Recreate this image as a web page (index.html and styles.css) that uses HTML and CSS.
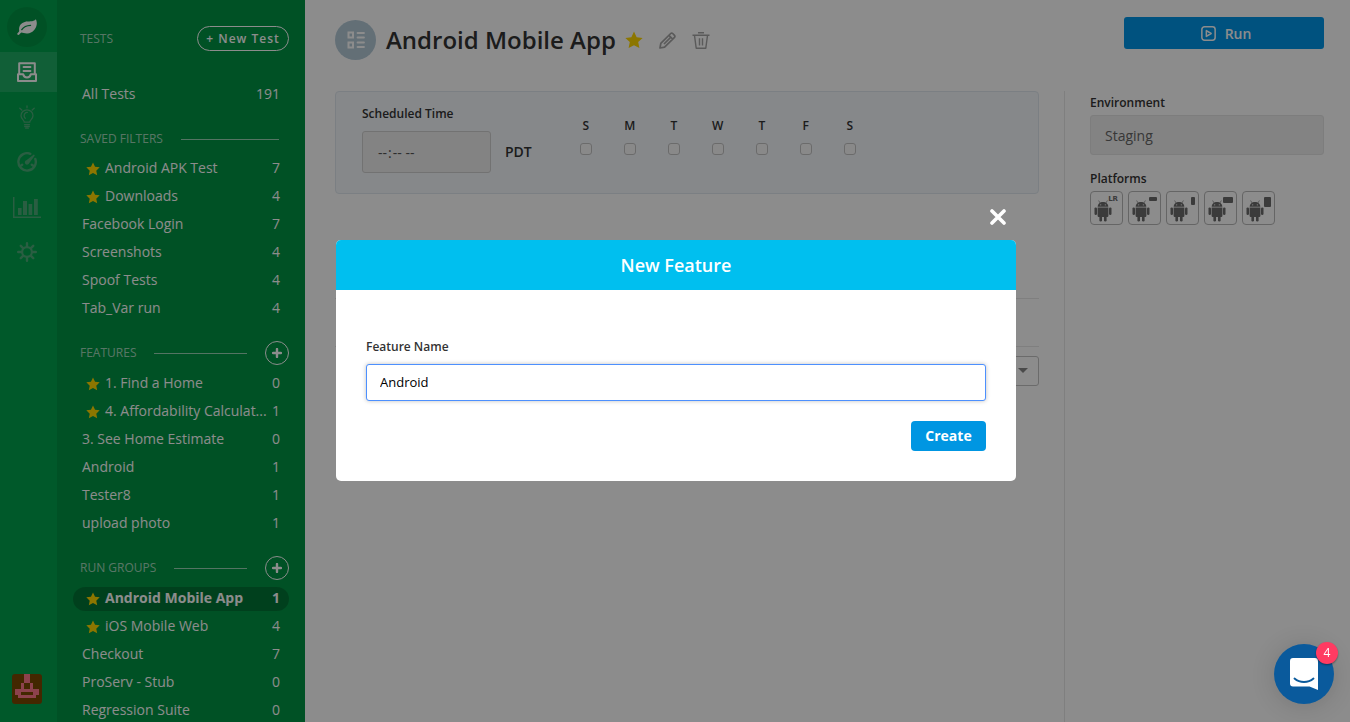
FILE: index.html
```html
<!DOCTYPE html>
<html lang="en">

<head>
    <meta charset="UTF-8">
    <meta name="viewport" content="width=device-width, initial-scale=1.0">
    <title>Android Mobile App</title>
    <link rel="stylesheet" href="styles.css">
</head>

<body>
    <svg class="sprite" aria-hidden="true">
        <symbol id="star" viewBox="0 0 24 24">
            <path d="M12 0.8l3.5 7.4 8 1-5.9 5.6 1.6 8L12 18.900l-7.200 3.900 1.600-8L0.500 9.200l8-1z" />
        </symbol>
        <symbol id="plus" viewBox="0 0 10 10">
            <path d="M5 1v8M1 5h8" stroke="currentColor" stroke-width="2.400" stroke-linecap="round" />
        </symbol>
        <symbol id="droid" viewBox="0 0 18 22">
            <path d="M4.600 0.500l1.500 2.500M13.400 0.500l-1.500 2.500" stroke="currentColor" stroke-width="0.600" />
            <path d="M3.700 6.800C3.700 4 6 2.100 9 2.100s5.300 1.900 5.300 4.700z" />
            <path d="M3.600 7.400h10.800v8.300a1.200 1.200 0 0 1-1.200 1.200H4.800a1.200 1.200 0 0 1-1.200-1.200z" />
            <rect x="0.500" y="7.400" width="2.500" height="7.600" rx="1.200" />
            <rect x="15" y="7.400" width="2.500" height="7.600" rx="1.200" />
            <rect x="5.400" y="15" width="2.600" height="6.500" rx="1.200" />
            <rect x="10" y="15" width="2.600" height="6.500" rx="1.200" />
            <circle class="eye" cx="6.700" cy="4.800" r="0.600" />
            <circle class="eye" cx="11.300" cy="4.800" r="0.600" />
        </symbol>
    </svg>

    <nav class="rail" aria-label="Main">
        <a href="#" class="logo" aria-label="Home">
            <svg width="20" height="16" viewBox="0 0 20 16">
                <path d="M18.800 0.300c0.800 1.200 1.200 3.200 0.900 5.200-0.600 4.700-4.200 8.500-9.200 9-2.500 0.200-4.500-0.500-6.200-0.900-0.900 0.500-1.400 1.200-2 1.900-0.600 0.700-1.700 0.400-2-0.200-0.300-0.700 0.200-1.200 0.700-1.600 0.700-0.600 1.200-1 1.200-1.900C1.500 7.200 3.800 3.900 7.800 2.900c3.600-0.900 8.500 0.400 11-2.600z" />
                <path class="vein" d="M4.800 10.600c1.800-2.500 4.800-4 8.700-4.200" />
            </svg>
        </a>
        <a href="#" class="rail-link active" aria-label="Tests">
            <svg width="20" height="20" viewBox="0 0 20 20">
                <path fill="none" stroke="currentColor" stroke-width="2" stroke-linejoin="round" d="M2.200 11.500V1.200h15.600v10.300M1 12.300h5.200c0.400 2 1.600 3.300 3.800 3.300s3.400-1.300 3.800-3.300H19V19H1z" />
                <path fill="none" stroke="currentColor" stroke-width="1.800" stroke-linecap="round" d="M6.500 5h7M6.500 9h7" />
            </svg>
        </a>
        <a href="#" class="rail-link" aria-label="Ideas">
            <svg width="16" height="24" viewBox="0 0 16 24">
                <g fill="none" stroke="currentColor" stroke-width="1.300" stroke-linecap="round">
                    <path d="M8 0.800v2M0.800 3.200l2 1.800M15.200 3.200l-2 1.800" />
                    <path d="M5.300 17.200c0-2.200-3.300-3.300-3.300-6.400a6 6 0 0 1 12 0c0 3.100-3.300 4.200-3.300 6.400z" />
                    <path d="M8.300 7.400c-2.200 0-3.400 1.800-3.100 3.900 0.200 1 0.600 1.500 1.100 2" />
                    <path d="M5.500 19.700h5M5.700 21.500h4.600M6.700 23.200h2.600" />
                </g>
            </svg>
        </a>
        <a href="#" class="rail-link" aria-label="Speed">
            <svg width="20" height="20" viewBox="0 0 20 20">
                <path fill="none" stroke="currentColor" stroke-width="2.400" stroke-linecap="round" d="M13.300 1.800A8.700 8.700 0 1 0 18.300 7M3.800 13.700l1.400-1M16.200 13.700l-1.400-1" />
                <path d="M16.800 2.600c0.700 0.300 1 0.700 0.900 1.200l-5.400 7.300a2.300 2.300 0 1 1-2.900-2.900z" />
            </svg>
        </a>
        <a href="#" class="rail-link" aria-label="Reports">
            <svg width="28" height="21" viewBox="0 0 28 21">
                <path d="M0 0h1.500v19.500H28V21H0zM5 11h3.600v7H5zM10 4h4v14h-4zM15.600 7h3.600v11h-3.600zM21 2h3.800v16H21z" />
            </svg>
        </a>
        <a href="#" class="rail-link" aria-label="Settings">
            <svg width="20" height="20" viewBox="0 0 20 20">
                <circle cx="10" cy="10" r="4.900" fill="none" stroke="currentColor" stroke-width="2.200" />
                <path stroke="currentColor" stroke-width="2.400" stroke-linecap="round" d="M10 1.200v3M10 15.800v3M1.200 10h3M15.800 10h3M3.800 3.800l2 2M14.200 14.200l2 2M3.800 16.200l2-2M14.200 5.800l2-2" />
            </svg>
        </a>
        <a href="#" class="avatar" aria-label="Account">
            <svg width="30" height="30" viewBox="0 0 10 10" shape-rendering="crispEdges">
                <path d="M4 0h2v3h1v2h2v2H8v1H2V7H1V5h2V3h1zM4 3v2h2V3zM3 6v1h4V6z" fill-rule="evenodd" />
            </svg>
        </a>
    </nav>

    <aside class="sidebar">
        <header class="sidebar-top">
            <h2>TESTS</h2>
            <button type="button" class="new-test">+ New Test</button>
        </header>

        <ul class="list">
            <li><a href="#"><span class="name">All Tests</span><span>191</span></a></li>
        </ul>

        <div class="section-head no-button">
            <h2>SAVED FILTERS</h2>
            <hr>
        </div>
        <ul class="list">
            <li><a href="#"><svg class="star"><use href="#star" /></svg><span class="name">Android APK Test</span><span>7</span></a></li>
            <li><a href="#"><svg class="star"><use href="#star" /></svg><span class="name">Downloads</span><span>4</span></a></li>
            <li><a href="#"><span class="name">Facebook Login</span><span>7</span></a></li>
            <li><a href="#"><span class="name">Screenshots</span><span>4</span></a></li>
            <li><a href="#"><span class="name">Spoof Tests</span><span>4</span></a></li>
            <li><a href="#"><span class="name">Tab_Var run</span><span>4</span></a></li>
        </ul>

        <div class="section-head">
            <h2>FEATURES</h2>
            <hr>
            <button type="button" class="add" aria-label="Add feature"><svg width="10" height="10"><use href="#plus" /></svg></button>
        </div>
        <ul class="list">
            <li><a href="#"><svg class="star"><use href="#star" /></svg><span class="name">1. Find a Home</span><span>0</span></a></li>
            <li><a href="#"><svg class="star"><use href="#star" /></svg><span class="name">4. Affordability Calculat...</span><span>1</span></a></li>
            <li><a href="#"><span class="name">3. See Home Estimate</span><span>0</span></a></li>
            <li><a href="#"><span class="name">Android</span><span>1</span></a></li>
            <li><a href="#"><span class="name">Tester8</span><span>1</span></a></li>
            <li><a href="#"><span class="name">upload photo</span><span>1</span></a></li>
        </ul>

        <div class="section-head">
            <h2>RUN GROUPS</h2>
            <hr>
            <button type="button" class="add" aria-label="Add run group"><svg width="10" height="10"><use href="#plus" /></svg></button>
        </div>
        <ul class="list">
            <li><a href="#" class="selected"><svg class="star"><use href="#star" /></svg><span class="name">Android Mobile App</span><span>1</span></a></li>
            <li><a href="#"><svg class="star"><use href="#star" /></svg><span class="name">iOS Mobile Web</span><span>4</span></a></li>
            <li><a href="#"><span class="name">Checkout</span><span>7</span></a></li>
            <li><a href="#"><span class="name">ProServ - Stub</span><span>0</span></a></li>
            <li><a href="#"><span class="name">Regression Suite</span><span>0</span></a></li>
        </ul>
    </aside>

    <main class="main">
        <header class="page-head">
            <span class="group-icon">
                <svg width="18" height="18" viewBox="0 0 18 18">
                    <path fill="none" stroke="currentColor" stroke-width="2" d="M1.500 1.500h4.500v5h-4.500zM1.500 11.500h4.500v5h-4.500z" />
                    <path fill="none" stroke="currentColor" stroke-width="1.800" stroke-linecap="round" d="M10.500 2h6.500M10.500 6.500h6.500M10.500 11.500h6.500M10.500 16h6.500" />
                </svg>
            </span>
            <h1>Android Mobile App</h1>
            <button type="button" class="icon-button favorite" aria-label="Favorite"><svg width="18" height="18"><use href="#star" /></svg></button>
            <button type="button" class="icon-button" aria-label="Edit">
                <svg class="line" width="17" height="17" viewBox="0 0 17 17" stroke-width="1.700">
                    <path d="M1 16l0.800-4.600L11.700 1.500a1.400 1.400 0 0 1 2 0l1.800 1.800a1.400 1.400 0 0 1 0 2L5.600 15.200zM10 3.400L13.600 7M11.500 5.500L5 12" />
                </svg>
            </button>
            <button type="button" class="icon-button" aria-label="Delete">
                <svg class="line" width="18" height="17" viewBox="0 0 18 17" stroke-width="1.400">
                    <path d="M6 0.800h6M0.500 3.200h17M2.500 3.500l1.700 12.700h9.600l1.700-12.700M7.500 6.200v7.300M10.500 6.200v7.300" />
                </svg>
            </button>
            <button type="button" class="run">
                <svg class="line" width="15" height="15" viewBox="0 0 14 14" stroke-width="1.400">
                    <rect x="0.800" y="0.800" width="12.400" height="12.400" rx="2.500" />
                    <path d="M5 4.300v5.400L9.500 7z" />
                </svg>
                Run
            </button>
        </header>

        <div class="columns">
            <div class="content">
                <section class="schedule">
                    <div class="field">
                        <label for="time">Scheduled Time</label>
                        <div class="time-row">
                            <input type="time" id="time" disabled>
                            <span class="zone">PDT</span>
                        </div>
                    </div>
                    <div class="days">
                        <label>S<input type="checkbox"></label>
                        <label>M<input type="checkbox"></label>
                        <label>T<input type="checkbox"></label>
                        <label>W<input type="checkbox"></label>
                        <label>T<input type="checkbox"></label>
                        <label>F<input type="checkbox"></label>
                        <label>S<input type="checkbox"></label>
                    </div>
                </section>
                <div class="table-head"></div>
                <div class="filter">
                    <select aria-label="Filter"></select>
                    <svg width="10" height="5" viewBox="0 0 10 5"><path d="M0 0h10L5 5z" /></svg>
                </div>
            </div>

            <aside class="details">
                <label for="environment">Environment</label>
                <select id="environment">
                    <option>Staging</option>
                </select>
                <h3>Platforms</h3>
                <ul class="platforms">
                    <li><svg class="droid"><use href="#droid" /></svg><span class="lr">LR</span></li>
                    <li><svg class="droid"><use href="#droid" /></svg><span class="shape phone-wide"></span></li>
                    <li><svg class="droid"><use href="#droid" /></svg><span class="shape phone-tall"></span></li>
                    <li><svg class="droid"><use href="#droid" /></svg><span class="shape tablet-wide"></span></li>
                    <li><svg class="droid"><use href="#droid" /></svg><span class="shape tablet-tall"></span></li>
                </ul>
            </aside>
        </div>
    </main>

    <div class="overlay">
        <div class="modal" role="dialog" aria-labelledby="modal-title">
            <button type="button" class="close" aria-label="Close">
                <svg width="16" height="16" viewBox="0 0 16 16"><path d="M2 2l12 12M14 2L2 14" stroke="currentColor" stroke-width="3.600" stroke-linecap="round" /></svg>
            </button>
            <h2 id="modal-title">New Feature</h2>
            <form class="modal-body">
                <label for="feature-name">Feature Name</label>
                <input type="text" id="feature-name" value="Android">
                <button type="submit">Create</button>
            </form>
        </div>
    </div>

    <button type="button" class="chat" aria-label="Messages">
        <svg width="28" height="32" viewBox="0 0 28 32">
            <path d="M3 0h22a3 3 0 0 1 3 3v29l-8.500-3.500H3a3 3 0 0 1-3-3V3a3 3 0 0 1 3-3z" fill="#fff" />
            <path d="M4.500 20.500c5.500 4.700 13.500 4.700 19 0" fill="none" stroke="#0a5a9c" stroke-width="1.900" stroke-linecap="round" />
        </svg>
        <span class="count">4</span>
    </button>
</body>

</html>
```
FILE: styles.css
```css
* {
    margin: 0;
    padding: 0;
    box-sizing: border-box;
}

body {
    display: flex;
    height: 100vh;
    overflow: hidden;
    font-family: "Open Sans", "Noto Sans", sans-serif;
    font-size: 14px;
    color: #333;
    background-color: #fff;
}

a {
    color: inherit;
    text-decoration: none;
}

ul {
    list-style: none;
}

button,
input,
select {
    font: inherit;
    color: inherit;
}

button {
    border: 0;
    background: none;
}

svg {
    display: block;
    fill: currentColor;
}

.line {
    fill: none;
    stroke: currentColor;
    stroke-linejoin: round;
}

.sprite {
    position: absolute;
    width: 0;
    height: 0;
}

/* left rail */
.rail {
    width: 57px;
    flex-shrink: 0;
    display: flex;
    flex-direction: column;
    background-color: #00a34d;
    color: #fff;
}

.logo {
    display: flex;
    align-items: center;
    justify-content: center;
    width: 40px;
    height: 40px;
    margin: 7px 7px 5px;
    border-radius: 50%;
    background-color: #009444;
}

.vein {
    fill: none;
    stroke: #009444;
    stroke-width: 1.4;
    stroke-linecap: round;
}

.rail-link {
    display: flex;
    align-items: center;
    justify-content: center;
    height: 40px;
    margin-bottom: 5px;
    padding-right: 3px;
    color: #4dab78;
}

.rail-link.active {
    color: #fff;
    background-color: #20ae64;
}

.avatar {
    width: 30px;
    height: 30px;
    margin: auto 12px 18px;
    border-radius: 3px;
    overflow: hidden;
    background-color: #7a4800;
    color: #ff788c;
}

/* sidebar */
.sidebar {
    width: 248px;
    flex-shrink: 0;
    padding: 26px 16px 0;
    background-color: #009444;
    color: #fff;
}

.sidebar h2 {
    font-size: 12px;
    font-weight: 400;
    line-height: 18px;
    color: rgba(255, 255, 255, 0.65);
}

.sidebar-top {
    display: flex;
    align-items: center;
    justify-content: space-between;
    padding-left: 7px;
    margin-bottom: 32px;
}

.new-test {
    width: 92px;
    height: 25px;
    border: 1px solid #fff;
    border-radius: 13px;
    font-size: 12px;
    font-weight: 600;
    letter-spacing: 1px;
    line-height: 20px;
}

.list {
    display: flex;
    flex-direction: column;
    gap: 4px;
}

.list a {
    display: flex;
    height: 24px;
    padding: 0 9px;
    border-radius: 12px;
    line-height: 22px;
}

.list .name {
    flex: 1;
    white-space: nowrap;
}

.list .selected {
    background-color: rgba(0, 0, 0, 0.2);
    font-weight: 700;
}

.star {
    width: 14px;
    height: 14px;
    margin: 5px 5px 0 4px;
    color: #ffd700;
}

.section-head {
    display: flex;
    align-items: center;
    gap: 18px;
    height: 24px;
    margin: 20px 0 7px;
    padding-left: 7px;
}

.section-head.no-button {
    margin-bottom: 6px;
    padding-right: 10px;
}

.section-head hr {
    flex: 1;
    border: 0;
    border-top: 1px solid rgba(255, 255, 255, 0.6);
}

.add {
    display: flex;
    align-items: center;
    justify-content: center;
    width: 24px;
    height: 24px;
    border: 1px solid #fff;
    border-radius: 50%;
}

/* main area */
.main {
    flex: 1;
    display: flex;
    flex-direction: column;
    padding: 17px 26px 0 30px;
}

.page-head {
    display: flex;
    align-items: center;
    height: 46px;
    margin-bottom: 28px;
}

.group-icon {
    display: flex;
    align-items: center;
    justify-content: center;
    width: 41px;
    height: 40px;
    margin-right: 10px;
    border-radius: 50%;
    background-color: #b4cad8;
    color: #fff;
}

.page-head h1 {
    font-size: 24px;
    font-weight: 600;
    line-height: 32px;
}

.icon-button {
    margin-left: 16px;
    color: #a4a4a4;
}

.favorite {
    margin-left: 9px;
    color: #ffd700;
}

.run {
    display: flex;
    align-items: center;
    justify-content: center;
    gap: 9px;
    align-self: flex-start;
    width: 200px;
    height: 32px;
    margin-left: auto;
    padding-left: 4px;
    border-radius: 3px;
    font-weight: 600;
    color: #fff;
    background-color: #0096e8;
}

.columns {
    flex: 1;
    display: flex;
    gap: 25px;
}

.content {
    flex: 1;
}

.schedule {
    display: flex;
    padding: 12px 26px 20px;
    border: 1px solid #e0e8ee;
    border-radius: 4px;
    background-color: #f4f8fc;
}

label,
.details h3 {
    font-size: 12px;
    font-weight: 600;
    line-height: 20px;
}

.field {
    display: flex;
    flex-direction: column;
    gap: 7px;
}

.time-row {
    display: flex;
    align-items: center;
    gap: 14px;
}

.time-row input {
    width: 129px;
    height: 42px;
    padding: 0 14px;
    border: 1px solid #d0d0d0;
    border-radius: 3px;
    background-color: #eee;
    color: #555;
}

.time-row input::-webkit-calendar-picker-indicator {
    display: none;
}

.zone {
    font-weight: 600;
    line-height: 20px;
}

.days {
    display: flex;
    margin: 12px 0 0 32px;
}

.days label {
    display: flex;
    flex-direction: column;
    align-items: center;
    gap: 7px;
    width: 44px;
}

.days input {
    appearance: none;
    width: 12px;
    height: 12px;
    border: 1px solid #c4c4c4;
    border-radius: 3px;
    background-color: #fafafa;
}

.table-head {
    height: 49px;
    margin-top: 104px;
    border-top: 1px solid #e8e8e8;
    border-bottom: 1px solid #e8e8e8;
}

.filter {
    position: relative;
    width: 180px;
    margin: 9px 0 0 auto;
}

.filter select {
    appearance: none;
    width: 100%;
    height: 30px;
    border: 1px solid #c4c4c4;
    border-radius: 3px;
    background-color: #fff;
}

.filter svg {
    position: absolute;
    right: 11px;
    top: 12px;
    color: #888;
}

.details {
    width: 260px;
    padding-left: 25px;
    border-left: 1px solid #e8e8e8;
}

.details label {
    display: block;
    margin: 2px 0;
}

.details select {
    appearance: none;
    width: 100%;
    height: 40px;
    padding: 0 14px;
    border: 1px solid #e4e4e4;
    border-radius: 3px;
    background-color: #eee;
    color: #666;
    opacity: 1;
}

.details h3 {
    margin: 14px 0 2px;
}

.platforms {
    display: flex;
    gap: 5px;
}

.platforms li {
    position: relative;
    width: 33px;
    height: 34px;
    border: 1px solid #b8b8b8;
    border-radius: 4px;
    color: #6c6c6c;
}

.droid {
    width: 18px;
    height: 22px;
    margin: 8px 0 0 3px;
}

.eye {
    fill: #fff;
}

.lr {
    position: absolute;
    top: 2px;
    right: 4px;
    font-family: "DejaVu Sans", sans-serif;
    font-size: 7px;
    font-weight: 700;
    line-height: 11px;
}

.shape {
    position: absolute;
    top: 5px;
    right: 3px;
    border-radius: 1px;
    background-color: #6c6c6c;
}

.phone-wide {
    width: 8px;
    height: 4px;
}

.phone-tall {
    width: 4px;
    height: 8px;
}

.tablet-wide {
    width: 10px;
    height: 6px;
}

.tablet-tall {
    width: 7px;
    height: 10px;
}

/* modal */
.overlay {
    position: fixed;
    inset: 0;
    display: flex;
    align-items: center;
    justify-content: center;
    padding: 0 0 2px 2px;
    background-color: rgba(0, 0, 0, 0.45);
}

.modal {
    position: relative;
    width: 680px;
    max-width: 100%;
    border-radius: 5px;
    background-color: #fff;
}

.modal h2 {
    border-radius: 5px 5px 0 0;
    background-color: #00bfef;
    color: #fff;
    font-size: 18px;
    font-weight: 600;
    line-height: 50px;
    text-align: center;
}

.close {
    position: absolute;
    top: -31px;
    right: 10px;
    color: #fff;
}

.modal-body {
    display: flex;
    flex-direction: column;
    padding: 47px 30px 30px;
}

.modal-body input {
    height: 37px;
    margin: 7px 0 20px;
    padding: 0 13px;
    border: 1px solid #4d90fe;
    border-radius: 3px;
    box-shadow: 0 0 4px rgba(0, 0, 0, 0.25);
    font-size: 13px;
    color: #000;
    outline: 0;
}

.modal-body button {
    align-self: flex-end;
    width: 75px;
    height: 30px;
    border-radius: 4px;
    background-color: #0096e2;
    color: #fff;
    font-weight: 700;
}

/* chat launcher */
.chat {
    position: fixed;
    right: 16px;
    bottom: 18px;
    display: flex;
    align-items: center;
    justify-content: center;
    width: 60px;
    height: 60px;
    border-radius: 50%;
    background-color: #0a5a9c;
    box-shadow: 0 2px 24px rgba(0, 0, 0, 0.15);
}

.count {
    position: absolute;
    top: -2px;
    right: -4px;
    width: 22px;
    border-radius: 50%;
    background-color: #ff3b62;
    box-shadow: 0 1px 2px rgba(0, 0, 0, 0.4);
    color: #fff;
    font-size: 12px;
    line-height: 22px;
}
```
